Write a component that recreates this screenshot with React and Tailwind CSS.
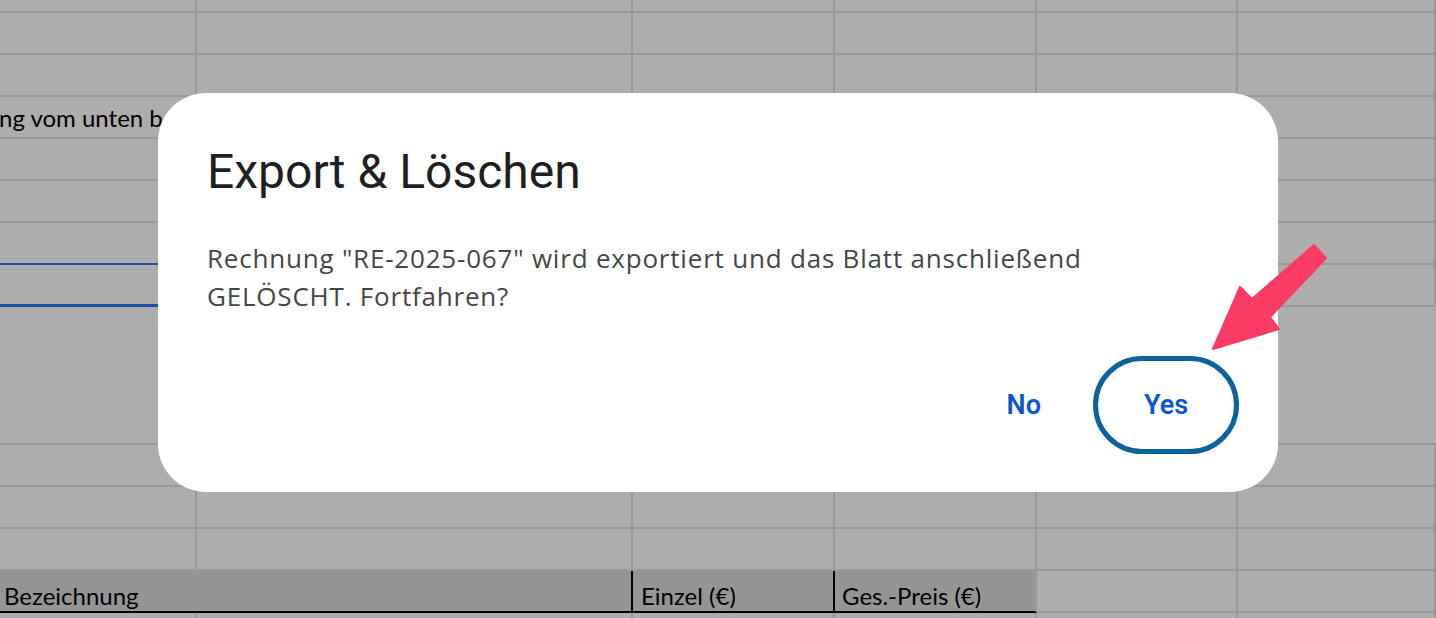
const COLS = [197, 436, 202, 202, 201, 198];

const Cell = ({ w, className = "", children }) => (
  <div
    className={`shrink-0 h-full border-r-2 border-b-2 border-[#999999] ${className}`}
    style={{ width: w }}
  >
    {children}
  </div>
);

const Row = ({ h, children }) => (
  <div className="flex w-full shrink-0" style={{ height: h }}>
    {children}
  </div>
);

const PlainRow = ({ h }) => (
  <Row h={h}>
    {COLS.map((w, i) => (
      <Cell key={i} w={w} />
    ))}
  </Row>
);

const Sheet = () => (
  <div className="flex flex-col font-['Lato',sans-serif] text-[24px] leading-none text-black">
    <PlainRow h={13} />
    <PlainRow h={42} />
    <PlainRow h={42} />
    <Row h={42}>
      <Cell w={633} className="flex items-end pb-[7px] overflow-hidden whitespace-nowrap">
        <span className="-ml-[1px]">ng vom unten be</span>
      </Cell>
      <Cell w={202} />
      <Cell w={202} />
      <Cell w={201} />
      <Cell w={198} />
    </Row>
    <PlainRow h={42} />
    <PlainRow h={42} />
    <Row h={42}>
      <Cell w={633} className="border-b-[#1d50a2]" />
      <Cell w={202} />
      <Cell w={202} />
      <Cell w={201} />
      <Cell w={198} />
    </Row>
    {/* selected range */}
    <Row h={42}>
      <Cell w={633} className="border-b-[3px] border-b-[#1d50a2]" />
      <Cell w={202} />
      <Cell w={202} />
      <Cell w={201} />
      <Cell w={198} />
    </Row>
    <div className="h-[138px] w-full shrink-0 border-b-2 border-[#999999]" />
    <Row h={42}>
      <Cell w={633} />
      <Cell w={202} />
      <Cell w={202} />
      <Cell w={201} />
      <Cell w={198} />
    </Row>
    <PlainRow h={42} />
    <PlainRow h={42} />
    {/* table header */}
    <Row h={42}>
      <div className="w-[633px] shrink-0 h-full bg-[#959595] border-r-2 border-b-2 border-black flex items-end pb-[3px] pl-[4px]">
        Bezeichnung
      </div>
      <div className="w-[202px] shrink-0 h-full bg-[#959595] border-r-2 border-b-2 border-black flex items-end pb-[3px] pl-[8px]">
        Einzel (€)
      </div>
      <div className="w-[202px] shrink-0 h-full bg-[#959595] border-r-2 border-r-[#999999] border-b-2 border-black flex items-end pb-[3px] pl-[7px]">
        Ges.-Preis (€)
      </div>
      <Cell w={201} />
      <Cell w={198} />
    </Row>
    <PlainRow h={42} />
  </div>
);

const Arrow = () => (
  <svg
    className="absolute left-[1200px] top-[235px]"
    width="140"
    height="130"
    viewBox="0 0 140 130"
  >
    <polygon
      points="13,114 40,52 52,64 114,10 126,23 70,82 79,94"
      fill="#fb3b64"
      stroke="#fb3b64"
      strokeWidth="2"
      strokeLinejoin="round"
    />
  </svg>
);

export default function App() {
  return (
    <div className="relative w-[1436px] h-[618px] overflow-hidden bg-[#adadad]">
      <Sheet />

      <div className="absolute left-[158px] top-[93px] w-[1120px] h-[399px] rounded-[48px] bg-white flex flex-col pl-[49px] pr-[39px] pt-[49px] pb-[38px]">
        <h2 className="font-['Roboto',sans-serif] text-[48px] leading-[60px] text-[#1f1f1f] font-normal">
          Export &amp; Löschen
        </h2>
        <p className="mt-[37px] font-['Open_Sans',sans-serif] text-[26px] leading-[38px] tracking-[0.8px] text-[#444746] max-w-[940px]">
          Rechnung "RE-2025-067" wird exportiert und das Blatt anschließend
          GELÖSCHT. Fortfahren?
        </p>
        <div className="mt-auto flex justify-end items-center gap-[28px] font-['Roboto',sans-serif]">
          <button className="h-[98px] px-[24px] text-[27px] font-semibold text-[#0b57d0]">
            No
          </button>
          <button className="h-[98px] w-[146px] rounded-full border-[5px] border-[#0b639d] text-[27px] font-semibold text-[#0b57d0]">
            Yes
          </button>
        </div>
      </div>

      <Arrow />
    </div>
  );
}
